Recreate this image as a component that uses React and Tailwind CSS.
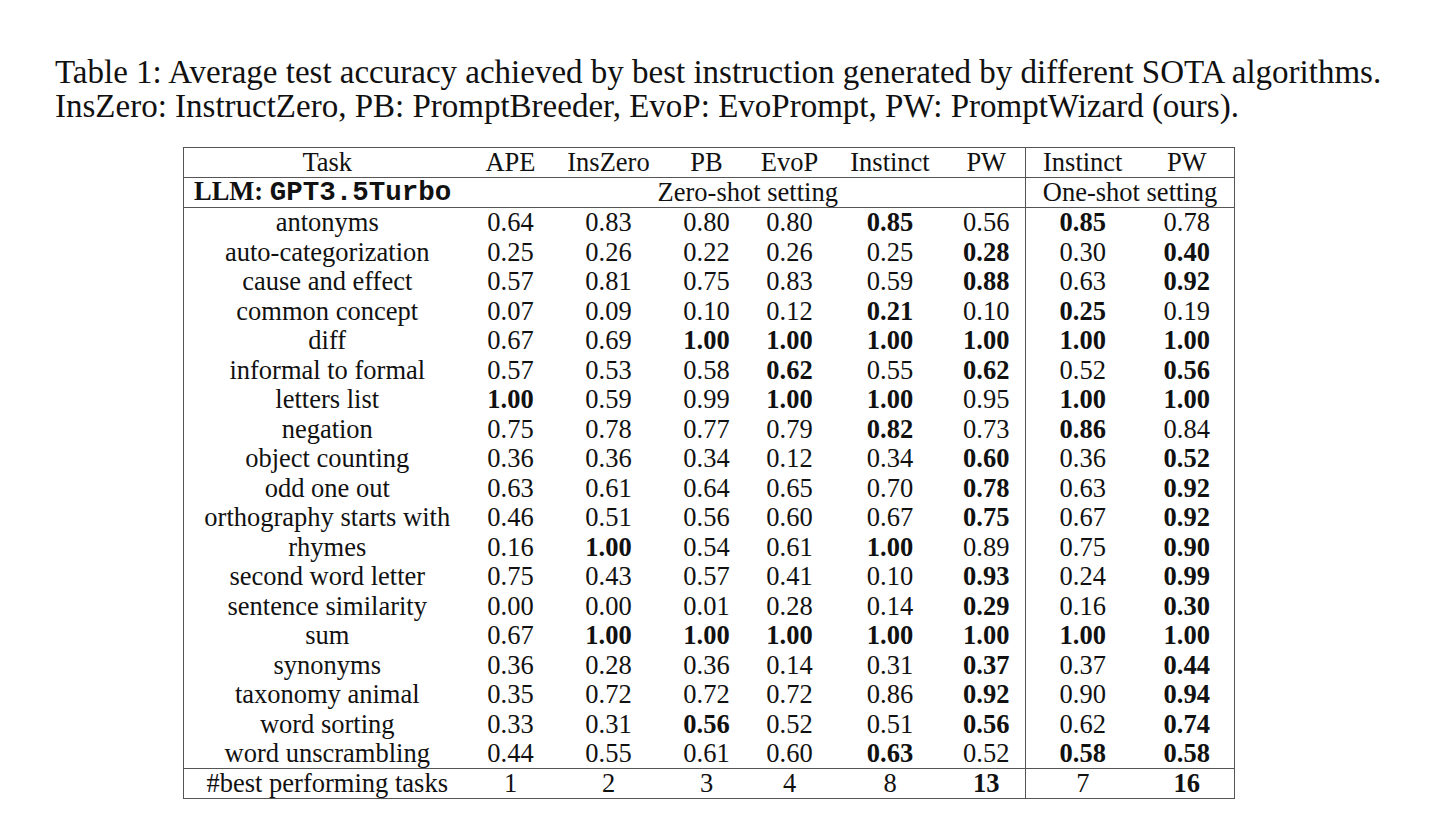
const rows = [
  ['antonyms', ['0.64', '0.83', '0.80', '0.80', '*0.85', '0.56'], ['*0.85', '0.78']],
  ['auto-categorization', ['0.25', '0.26', '0.22', '0.26', '0.25', '*0.28'], ['0.30', '*0.40']],
  ['cause and effect', ['0.57', '0.81', '0.75', '0.83', '0.59', '*0.88'], ['0.63', '*0.92']],
  ['common concept', ['0.07', '0.09', '0.10', '0.12', '*0.21', '0.10'], ['*0.25', '0.19']],
  ['diff', ['0.67', '0.69', '*1.00', '*1.00', '*1.00', '*1.00'], ['*1.00', '*1.00']],
  ['informal to formal', ['0.57', '0.53', '0.58', '*0.62', '0.55', '*0.62'], ['0.52', '*0.56']],
  ['letters list', ['*1.00', '0.59', '0.99', '*1.00', '*1.00', '0.95'], ['*1.00', '*1.00']],
  ['negation', ['0.75', '0.78', '0.77', '0.79', '*0.82', '0.73'], ['*0.86', '0.84']],
  ['object counting', ['0.36', '0.36', '0.34', '0.12', '0.34', '*0.60'], ['0.36', '*0.52']],
  ['odd one out', ['0.63', '0.61', '0.64', '0.65', '0.70', '*0.78'], ['0.63', '*0.92']],
  ['orthography starts with', ['0.46', '0.51', '0.56', '0.60', '0.67', '*0.75'], ['0.67', '*0.92']],
  ['rhymes', ['0.16', '*1.00', '0.54', '0.61', '*1.00', '0.89'], ['0.75', '*0.90']],
  ['second word letter', ['0.75', '0.43', '0.57', '0.41', '0.10', '*0.93'], ['0.24', '*0.99']],
  ['sentence similarity', ['0.00', '0.00', '0.01', '0.28', '0.14', '*0.29'], ['0.16', '*0.30']],
  ['sum', ['0.67', '*1.00', '*1.00', '*1.00', '*1.00', '*1.00'], ['*1.00', '*1.00']],
  ['synonyms', ['0.36', '0.28', '0.36', '0.14', '0.31', '*0.37'], ['0.37', '*0.44']],
  ['taxonomy animal', ['0.35', '0.72', '0.72', '0.72', '0.86', '*0.92'], ['0.90', '*0.94']],
  ['word sorting', ['0.33', '0.31', '*0.56', '0.52', '0.51', '*0.56'], ['0.62', '*0.74']],
  ['word unscrambling', ['0.44', '0.55', '0.61', '0.60', '*0.63', '0.52'], ['*0.58', '*0.58']],
];

const best = [['1', '2', '3', '4', '8', '*13'], ['7', '*16']];

function Val({ v, className = '' }) {
  const bold = v.startsWith('*');
  return (
    <td className={`p-0 text-center ${bold ? 'font-bold' : ''} ${className}`}>
      {bold ? v.slice(1) : v}
    </td>
  );
}

export default function App() {
  return (
    <div
      className="min-h-screen bg-white text-[#111] pt-[55px] pb-10"
      style={{ fontFamily: '"Liberation Serif", "Times New Roman", serif' }}
    >
      <p className="ml-[55px] text-[33px] leading-[34px] whitespace-nowrap">
        <span className="block">
          Table 1: Average test accuracy achieved by best instruction generated by different SOTA algorithms.
        </span>
        <span className="block">
          InsZero: InstructZero, PB: PromptBreeder, EvoP: EvoPrompt, PW: PromptWizard (ours).
        </span>
      </p>

      <table className="ml-[183px] mt-[24px] w-[1051px] table-fixed border-collapse border border-[#555] text-[26.5px] leading-none">
        <colgroup>
          <col className="w-[287px]" />
          <col className="w-[80px]" />
          <col className="w-[116px]" />
          <col className="w-[80px]" />
          <col className="w-[86px]" />
          <col className="w-[115px]" />
          <col className="w-[78px]" />
          <col className="w-[114px]" />
          <col className="w-[95px]" />
        </colgroup>
        <thead>
          <tr className="h-[30px] border-b border-[#555]">
            <th className="p-0 font-normal">Task</th>
            <th className="p-0 font-normal">APE</th>
            <th className="p-0 font-normal">InsZero</th>
            <th className="p-0 font-normal">PB</th>
            <th className="p-0 font-normal">EvoP</th>
            <th className="p-0 font-normal">Instinct</th>
            <th className="p-0 font-normal border-r border-[#555]">PW</th>
            <th className="p-0 font-normal">Instinct</th>
            <th className="p-0 font-normal">PW</th>
          </tr>
          <tr className="h-[30px] border-b border-[#555]">
            <th className="p-0 pl-[10px] text-left font-bold whitespace-nowrap">
              LLM:{' '}
              <span
                className="font-bold text-[27.5px]"
                style={{ fontFamily: '"Liberation Mono", "Courier New", monospace' }}
              >
                GPT3.5Turbo
              </span>
            </th>
            <th colSpan={6} className="p-0 font-normal border-r border-[#555]">
              Zero-shot setting
            </th>
            <th colSpan={2} className="p-0 font-normal">
              One-shot setting
            </th>
          </tr>
        </thead>
        <tbody>
          {rows.map(([task, zero, one], i) => (
            <tr
              key={task}
              className={`h-[29.5px] ${i === rows.length - 1 ? 'border-b border-[#555]' : ''}`}
            >
              <td className="p-0 text-center whitespace-nowrap">{task}</td>
              {zero.map((v, j) => (
                <Val key={j} v={v} className={j === 5 ? 'border-r border-[#555]' : ''} />
              ))}
              {one.map((v, j) => (
                <Val key={j} v={v} />
              ))}
            </tr>
          ))}
          <tr className="h-[30px]">
            <td className="p-0 text-center whitespace-nowrap">#best performing tasks</td>
            {best[0].map((v, j) => (
              <Val key={j} v={v} className={j === 5 ? 'border-r border-[#555]' : ''} />
            ))}
            {best[1].map((v, j) => (
              <Val key={j} v={v} />
            ))}
          </tr>
        </tbody>
      </table>
    </div>
  );
}
